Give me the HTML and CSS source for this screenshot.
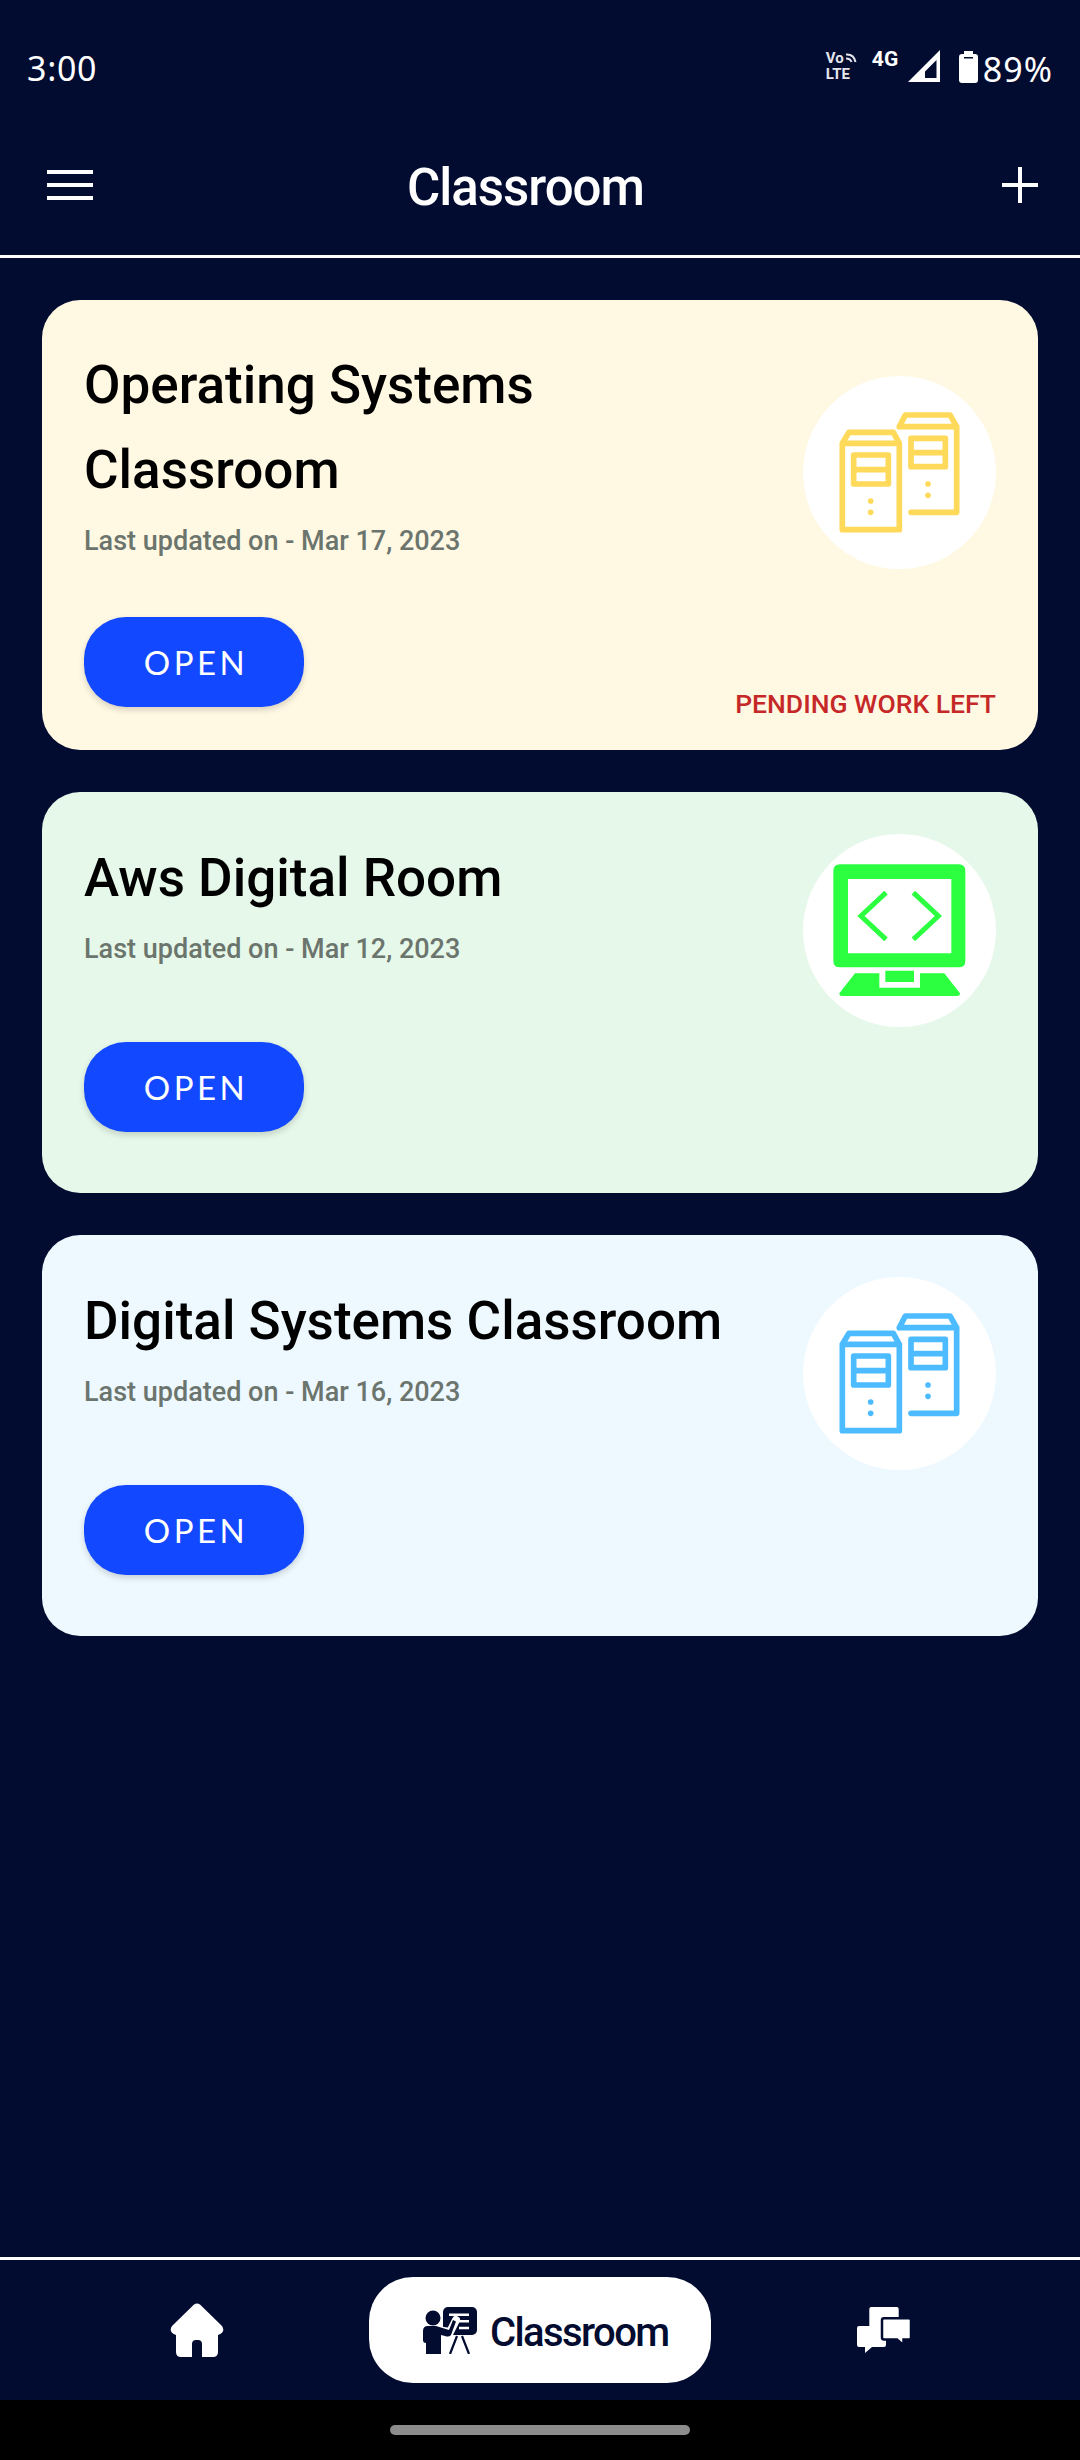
FILE: index.html
```html
<!DOCTYPE html>
<html lang="en">
<head>
<meta charset="utf-8">
<title>Classroom</title>
<link rel="stylesheet" href="styles.css">
</head>
<body>
<svg class="defs" width="0" height="0" aria-hidden="true">
  <symbol id="towers" viewBox="69 48 579 579">
    <g fill="none" stroke="currentColor" stroke-width="17" stroke-linejoin="round" stroke-linecap="round">
      <path d="M187 250H358V509H187ZM187 250L207 217H340L358 250"/>
      <path d="M221 285H325V372H221ZM221 329H325"/>
      <path d="M358 200H530V457H393M358 200L376 165H510L530 200"/>
      <path d="M393 235H496V320H393ZM393 278H496"/>
    </g>
    <g fill="currentColor">
      <circle cx="272" cy="423" r="8.5"/><circle cx="272" cy="457" r="8.5"/>
      <circle cx="444" cy="372" r="8.5"/><circle cx="444" cy="406" r="8.5"/>
    </g>
  </symbol>
</svg>
<div class="screen">
  <div class="status">
    <span class="time">3:00</span>
    <div class="status-icons">
      <div class="volte">
        <div class="vo"><span>Vo</span>
          <svg class="vo-arcs" viewBox="0 0 14 14"><path d="M1 3.5Q9 3 10.500 11M1 7.500Q5.500 7.500 6.500 11" fill="none" stroke="currentColor" stroke-width="2"/></svg>
        </div>
        <span>LTE</span>
      </div>
      <span class="net">4G</span>
      <svg class="signal" viewBox="0 0 32 32"><path fill-rule="evenodd" fill="#fff" d="M0 32L32 0V32ZM17 28H28.500V10L17 21.500Z"/></svg>
      <svg class="battery" viewBox="0 0 19 32"><path fill="#fff" d="M5 0H14V3H16Q19 3 19 6V29Q19 32 16 32H3Q0 32 0 29V6Q0 3 3 3H5Z"/><path fill="#020b30" d="M5 6H14V7.500H5Z"/></svg>
      <span class="pct">89%</span>
    </div>
  </div>
  <header class="appbar">
    <div class="burger"><span></span><span></span><span></span></div>
    <h1 class="appbar-title">Classroom</h1>
    <svg class="plus" viewBox="0 0 36 36"><path d="M18 0V36M0 18H36" stroke="#fff" stroke-width="4"/></svg>
  </header>
  <main class="list">
    <article class="card card-yellow">
      <div class="card-top">
        <div class="card-text">
          <h2 class="card-title">Operating Systems<br>Classroom</h2>
          <p class="card-sub">Last updated on - Mar 17, 2023</p>
        </div>
        <div class="badge icon-yellow"><svg class="badge-art"><use href="#towers"/></svg></div>
      </div>
      <div class="card-foot">
        <button class="open">OPEN</button>
        <span class="pending">PENDING WORK LEFT</span>
      </div>
    </article>
    <article class="card card-green">
      <div class="card-top">
        <div class="card-text">
          <h2 class="card-title">Aws Digital Room</h2>
          <p class="card-sub">Last updated on - Mar 12, 2023</p>
        </div>
        <div class="badge">
          <svg class="badge-art" viewBox="69 42 579 579">
            <path fill="#2bff40" fill-rule="evenodd" d="M180 133H536Q556 133 556 153V422Q556 442 536 442H180Q160 442 160 422V153Q160 133 180 133ZM204 177V400H514V177Z"/>
            <path d="M318 218L243 288L318 358M400 218L475 288L400 358" fill="none" stroke="#2bff40" stroke-width="15"/>
            <path fill="#2bff40" d="M225 460H298V503H420V460H493L540 520Q540 528 532 528H186Q178 528 178 520ZM316 452H402V486H316Z"/>
          </svg>
        </div>
      </div>
      <div class="card-foot"><button class="open">OPEN</button></div>
    </article>
    <article class="card card-blue">
      <div class="card-top">
        <div class="card-text">
          <h2 class="card-title">Digital Systems Classroom</h2>
          <p class="card-sub">Last updated on - Mar 16, 2023</p>
        </div>
        <div class="badge icon-blue"><svg class="badge-art"><use href="#towers"/></svg></div>
      </div>
      <div class="card-foot"><button class="open">OPEN</button></div>
    </article>
  </main>
  <nav class="tabs">
    <div class="tab">
      <svg class="tab-home" viewBox="0 0 54 54"><path fill="#fff" d="M24 1.500Q27 -0.500 30 1.500L52 23Q56 29 48 32V49Q48 54 43 54H32V41Q32 37 28 37H26Q22 37 22 41V54H11Q6 54 6 49V32Q-2 29 2 23Z"/></svg>
    </div>
    <div class="tab-pill">
      <svg class="tab-teach" viewBox="0 0 54 47">
        <rect x="20" y="0" width="34" height="28" rx="5" fill="#020b30"/>
        <path d="M26 7.700H46M36 14.300H46M36 21H46" stroke="#fff" stroke-width="2.600"/>
        <path d="M34 29L27 47M39 29L46 47" stroke="#020b30" stroke-width="2.200"/>
        <circle cx="10" cy="11" r="7.500" fill="#020b30"/>
        <path d="M14 23L27 25L33 13" fill="none" stroke="#fff" stroke-width="8" stroke-linecap="round"/>
        <path d="M5 19H13L26 23L30 13L33 14.500L28 28Q26 30.500 22 29L18 28V47H3V36Q0 36 0 33V24Q0 19 5 19Z" fill="#020b30"/>
      </svg>
      <span class="tab-label">Classroom</span>
    </div>
    <div class="tab">
      <svg class="tab-chat" viewBox="0 0 54 46">
        <rect x="12.300" y="0" width="29.400" height="24" rx="2" fill="#fff"/>
        <path d="M2 19H27Q29 19 29 21V38Q29 40 27 40H15L8 46V40H2Q0 40 0 38V21Q0 19 2 19Z" fill="#fff"/>
        <path d="M27 11.300H52Q54 11.300 54 13.300V30.600Q54 32.600 52 32.600H46.500V38.300L40 32.600H27Q25 32.600 25 30.600V13.300Q25 11.300 27 11.300Z" fill="#fff" stroke="#020b30" stroke-width="2.500"/>
      </svg>
    </div>
  </nav>
  <div class="gesture"><span class="gesture-bar"></span></div>
</div>
</body>
</html>
```
FILE: styles.css
```css
* { box-sizing: border-box; }
html, body { margin: 0; padding: 0; }
body { background: #020b30; font-family: Roboto, "Noto Sans", sans-serif; }
.defs { position: absolute; }
.screen { width: 1080px; height: 2460px; display: flex; flex-direction: column; overflow: hidden; }

.status { height: 90px; padding: 46px 27px 0 27px; display: flex; justify-content: space-between; align-items: flex-start; color: #fff; }
.time { font-family: "Noto Sans", sans-serif; font-size: 34px; line-height: 44px; letter-spacing: .7px; }
.status-icons { display: flex; align-items: flex-start; margin-top: 4px; }
.volte { display: flex; flex-direction: column; width: 34px; font-size: 15px; line-height: 16px; font-weight: 700; color: #e4e6ec; margin-right: 12px; }
.vo { display: flex; align-items: center; }
.vo-arcs { width: 14px; height: 14px; margin-left: 1px; }
.net { font-size: 21px; line-height: 19px; font-weight: 700; width: 29px; margin-right: 7px; }
.signal { width: 32px; height: 32px; margin-right: 19px; }
.battery { width: 19px; height: 32px; margin-top: 1px; margin-right: 5px; }
.pct { font-family: "Noto Sans", sans-serif; font-size: 34px; line-height: 38px; letter-spacing: 1px; }

.appbar { height: 168px; padding: 30px 42px 0 47px; display: flex; align-items: center; border-bottom: 3px solid #fff; }
.burger { width: 46px; display: flex; flex-direction: column; gap: 9px; margin-top: -6px; }
.burger span { height: 4px; background: #fff; }
.appbar-title { flex: 1; margin: 0; padding-right: 44px; text-align: center; color: #fff; font-size: 51px; line-height: 60px; font-weight: 500; letter-spacing: -1px; }
.plus { width: 36px; height: 36px; margin-top: -6px; }

.list { flex: 1; padding: 42px 42px 0; display: flex; flex-direction: column; gap: 42px; }
.card { border-radius: 38px; padding: 42px 42px 61px; }
.card-yellow { background: #fff8e3; padding-top: 41px; padding-bottom: 43px; }
.card-green { background: #e6f8e9; }
.card-blue { background: #edf8ff; }
.card-top { display: flex; justify-content: space-between; align-items: center; }
.card-text { align-self: flex-start; padding-top: 2px; }
.card-title { margin: 0; color: #000; font-size: 53px; line-height: 85px; font-weight: 500; }
.card-sub { margin: 0; height: 91px; color: #6b756d; font-size: 27px; line-height: 57px; font-weight: 500; }
.badge { width: 193px; height: 193px; border-radius: 50%; background: #fff; flex: none; }
.badge-art { display: block; width: 193px; height: 193px; }
.icon-yellow { color: #ffd95a; }
.icon-blue { color: #4dbbff; }
.card-foot { margin-top: 15px; display: flex; justify-content: space-between; align-items: flex-end; }
.card-yellow .card-foot { margin-top: 13px; }
.open { width: 220px; height: 90px; border: 0; border-radius: 42px; background: #1248ff; color: #fff; font-family: Lato, sans-serif; font-size: 33px; letter-spacing: 3.5px; box-shadow: 0 3px 6px rgba(0, 0, 0, .16); padding: 0 0 0 4px; }
.pending { color: #c62828; font-size: 26.5px; line-height: 36px; font-weight: 500; margin-bottom: -15px; }

.tabs { height: 143px; border-top: 3px solid #fff; padding: 17px 24px 17px; display: grid; grid-template-columns: 1fr auto 1fr; align-items: center; }
.tab { display: flex; justify-content: center; }
.tab-home { width: 54px; height: 54px; display: block; }
.tab-chat { width: 54px; height: 46px; display: block; }
.tab-pill { width: 342px; height: 106px; border-radius: 44px; background: #fff; display: flex; align-items: center; padding-left: 54px; gap: 13px; }
.tab-teach { width: 54px; height: 47px; flex: none; }
.tab-label { color: #020b30; font-size: 40px; line-height: 46px; font-weight: 500; letter-spacing: -1.6px; padding-top: 5px; }

.gesture { height: 60px; background: #000; padding-top: 25px; display: flex; justify-content: center; align-items: flex-start; }
.gesture-bar { width: 300px; height: 10px; border-radius: 5px; background: #8c8c8c; }
```
